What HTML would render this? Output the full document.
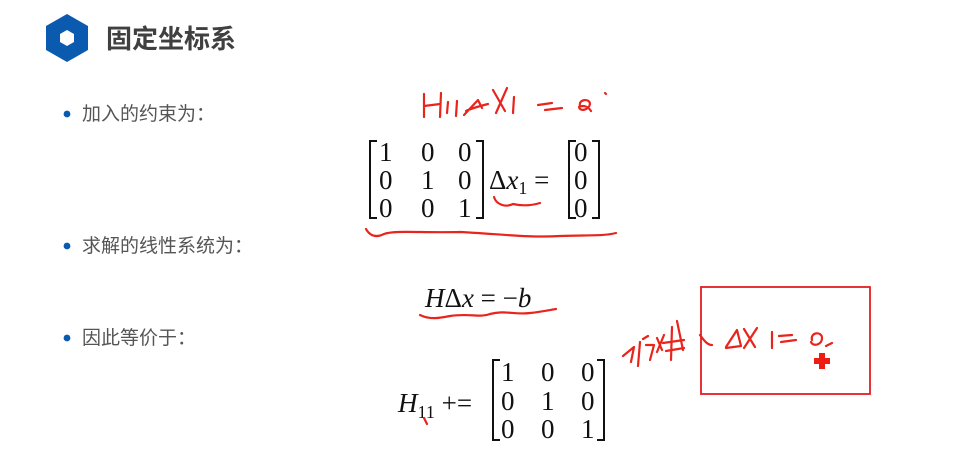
<!DOCTYPE html>
<html><head><meta charset="utf-8"><style>
html,body{margin:0;padding:0;background:#fff;width:955px;height:465px;overflow:hidden}
svg{display:block}
.cn{font-family:"Liberation Sans","Noto Sans CJK SC",sans-serif}
.m{font-family:"Liberation Serif","DejaVu Serif",serif;font-size:27px;fill:#111}
.r{fill:none;stroke:#e8241c;stroke-width:2.2;stroke-linecap:round;stroke-linejoin:round}
</style></head><body>
<svg width="955" height="465" viewBox="0 0 955 465">
<polygon points="67,14 88,26 88,50 67,62 46,50 46,26" fill="#0a5bb0"/>
<polygon points="67,30 74,34 74,42 67,46 60,42 60,34" fill="#fff"/>
<text x="106" y="48" class="cn" font-size="26" font-weight="bold" fill="#404040">固定坐标系</text>
<circle cx="67" cy="114" r="3.4" fill="#0a5bb0"/>
<text x="82" y="120" class="cn" font-size="19" fill="#555">加入的约束为：</text>
<circle cx="67" cy="246" r="3.4" fill="#0a5bb0"/>
<text x="82" y="252" class="cn" font-size="19" fill="#555">求解的线性系统为：</text>
<circle cx="67" cy="338" r="3.4" fill="#0a5bb0"/>
<text x="82" y="344" class="cn" font-size="19" fill="#555">因此等价于：</text>

<path d="M377,141 H370 V218 H377" fill="none" stroke="#111" stroke-width="2"/>
<path d="M476,141 H483 V218 H476" fill="none" stroke="#111" stroke-width="2"/>
<text x="379" y="161" class="m">1</text><text x="421" y="161" class="m">0</text><text x="458" y="161" class="m">0</text>
<text x="379" y="189" class="m">0</text><text x="421" y="189" class="m">1</text><text x="458" y="189" class="m">0</text>
<text x="379" y="217" class="m">0</text><text x="421" y="217" class="m">0</text><text x="458" y="217" class="m">1</text>
<text x="489" y="189" class="m">Δ<tspan font-style="italic">x</tspan><tspan font-size="18" dy="5">1</tspan><tspan dy="-5"> =</tspan></text>
<path d="M576,141 H569 V218 H576" fill="none" stroke="#111" stroke-width="2"/>
<path d="M592,141 H599 V218 H592" fill="none" stroke="#111" stroke-width="2"/>
<text x="574" y="161" class="m">0</text><text x="574" y="189" class="m">0</text><text x="574" y="217" class="m">0</text>

<text x="425" y="307" class="m"><tspan font-style="italic">H</tspan>Δ<tspan font-style="italic">x</tspan> = −<tspan font-style="italic">b</tspan></text>

<text x="398" y="412" class="m"><tspan font-style="italic">H</tspan><tspan font-size="18" dy="6">11</tspan><tspan dy="-6"> +=</tspan></text>
<path d="M500,360 H493 V440 H500" fill="none" stroke="#111" stroke-width="2"/>
<path d="M597,360 H604 V440 H597" fill="none" stroke="#111" stroke-width="2"/>
<text x="501" y="381" class="m">1</text><text x="541" y="381" class="m">0</text><text x="581" y="381" class="m">0</text>
<text x="501" y="410" class="m">0</text><text x="541" y="410" class="m">1</text><text x="581" y="410" class="m">0</text>
<text x="501" y="438" class="m">0</text><text x="541" y="438" class="m">0</text><text x="581" y="438" class="m">1</text>

<!-- top handwriting H11 ΔX1=a. -->
<path class="r" d="M424,94 L424,117 M424,106 L440,104 M441,93 L440,117 M448,102 L447,113 M457,101 L456,116 M464,115 L478,100 L482,108 M466,111 C472,108 480,106 488,104 M493,90 L505,111 M507,88 L496,113 M514,97 L513,113 M538,105 L552,103 M545,110 L562,108 M580,106 C578,99 590,98 590,104 C589,110 580,112 579,107 C583,105 588,106 591,111 M605,93 L606,94"/>
<path class="r" d="M366,229 C370,236 376,238 384,234 C395,230 420,233 460,232 C500,234 530,238 560,236 C590,235 605,236 616,233"/>
<path class="r" d="M494,197 C496,204 505,208 513,204 C522,206 530,206 540,203"/>
<path class="r" d="M420,315 C430,320 440,318 450,316 C470,313 480,318 490,314 C505,310 515,315 530,313 C540,312 550,310 556,309"/>
<!-- right handwriting -->
<path class="r" d="M623,356 L634,347 L631,362 M640,342 L638,366 M643,339 L648,336 M646,345 L654,345 L650,360 M657,338 L662,350 M664,335 L657,352 M672,327 L671,360 M663,343 L684,340 M666,351 L684,348 M677,321 L683,350 M700,335 C705,342 708,345 712,345 M726,347 L737,330 L741,346 L726,348 M744,329 L755,347 M757,328 L744,348 M772,332 L772,348 M779,336 L792,335 M781,342 L796,340 M812,340 C810,332 822,331 822,338 C822,345 813,347 811,342 M826,346 L832,343"/>
<rect x="701" y="287" width="169" height="107" fill="none" stroke="#e41d22" stroke-width="1.8"/>
<path d="M819,353 H825 V358 H830 V364 H825 V369 H819 V364 H814 V358 H819 Z" fill="#ee1c12"/>
<path class="r" d="M424,418 L427,424" stroke-width="1.2"/>
</svg>
</body></html>
